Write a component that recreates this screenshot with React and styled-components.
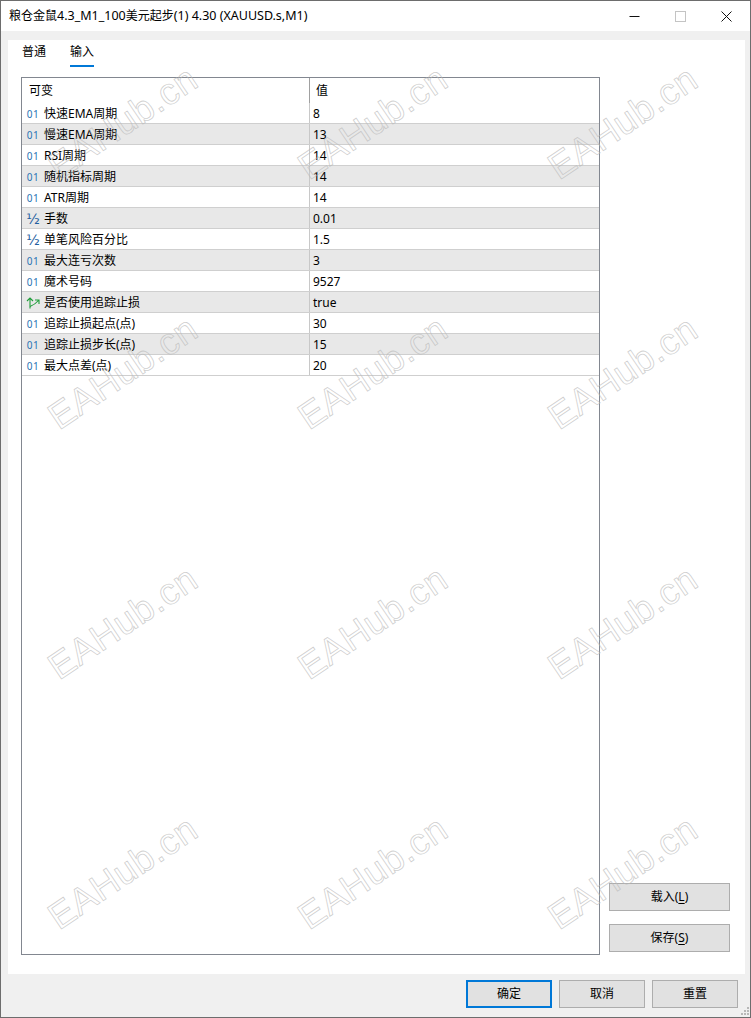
import React from 'react';
import styled, { createGlobalStyle } from 'styled-components';

const Global = createGlobalStyle`
  html, body { margin: 0; padding: 0; background: #f0f0f0; }
  * { box-sizing: border-box; }
  #root { width: 751px; height: 1018px; }
`;
const FONT = `"Noto Sans", "Noto Sans CJK SC", sans-serif`;

const Window = styled.div`
  position: relative; width: 751px; height: 1018px; overflow: hidden;
  display: flex; flex-direction: column;
  background: #f0f0f0; color: #000;
  border: 1px solid #6d6d6d;
  font: 12px/16px ${FONT};
`;
const TitleBar = styled.header`
  height: 30px; flex: none; background: #fff; display: flex; align-items: center; padding: 0 1px 0 8px;
`;
const Title = styled.div` flex: 1; font-size: 12.5px; color: #000; white-space: nowrap; `;
const TitleCjk = styled.span` font-size: 12px; `;
const WinButton = styled.div`
  width: 46px; height: 30px; display: flex; align-items: center; justify-content: center;
`;
const Body = styled.main`
  flex: 1; display: flex; flex-direction: column; padding: 9px 5px 0 7px; min-height: 0;
`;
const Panel = styled.section`
  flex: 1; background: #fff; display: flex; flex-direction: column; padding: 0 0 19px 13px; min-height: 0;
`;
const Tabs = styled.nav` display: flex; gap: 24px; height: 37px; padding: 3px 0 0 1px; `;
const Tab = styled.div`
  width: 24px; height: 24px; font-size: 12px; line-height: 18px; white-space: nowrap; color: #000;
  border-bottom: 2px solid ${p => (p.$active ? '#0078d7' : 'transparent')};
`;
const Content = styled.div` flex: 1; display: flex; min-height: 0; `;
const Table = styled.div`
  width: 579px; border: 1px solid #828790; display: flex; flex-direction: column; background: transparent;
`;
const Header = styled.div`
  display: grid; grid-template-columns: 287px 1fr; height: 25px; align-items: center;
`;
const HeadCell = styled.div`
  height: 25px; line-height: 25px; padding-left: 7px; font-size: 12px; color: #000;
  & + & { border-left: 1px solid #a0a0a0; padding-left: 6px; }
`;
const Row = styled.div`
  display: grid; grid-template-columns: 287px 1fr; height: 21px; align-items: center;
  background: ${p => (p.$alt ? '#e8e8e8' : 'transparent')};
  border-bottom: 1px solid #cfcfcf;
`;
const NameCell = styled.div`
  display: flex; align-items: center; height: 20px; padding-top: 2px; white-space: nowrap; font-size: 12px; color: #000;
`;
const IconBox = styled.span`
  width: 22px; flex: none; display: flex; justify-content: center;
`;
const IntMark = styled.span`
  font: 10px/12px "Noto Sans", sans-serif; color: #2873b4; letter-spacing: 0.6px;
`;
const FracMark = styled.span`
  font: 14px/16px "DejaVu Sans", sans-serif; color: #1f5f9f;
`;
const ValueCell = styled.div`
  height: 20px; line-height: 22px; padding-left: 3px; border-left: 1px solid #c8c8c8; font-size: 12px; color: #000;
`;
const Side = styled.aside`
  flex: 1; display: flex; flex-direction: column; justify-content: flex-end; align-items: flex-start;
  gap: 13px; padding: 0 0 3px 9px;
`;
const Button = styled.button`
  width: ${p => p.$w || 86}px; height: 28px; padding: 0; margin: 0; cursor: default;
  background: #e1e1e1; color: #000; font: 12px/16px ${FONT};
  border: ${p => (p.$primary ? '2px solid #0078d7' : '1px solid #adadad')};
  u { text-underline-offset: 2px; }
`;
const Footer = styled.footer`
  height: 43px; flex: none; display: flex; justify-content: flex-end; gap: 7px; padding: 6px 7px 0 0;
`;
const Grip = styled.svg` position: absolute; right: 0; bottom: 0; `;
const Watermarks = styled.div`
  position: absolute; top: -3px; left: -3px; right: 0; bottom: 0; pointer-events: none; overflow: hidden;
  display: grid; grid-template-columns: repeat(3, 250px); grid-auto-rows: 250px;
`;
const Mark = styled.div`
  display: flex; align-items: center; justify-content: center;
  font: 37px/44px "Liberation Sans", sans-serif; letter-spacing: 0.5px;
  color: transparent; -webkit-text-stroke: 0.8px rgba(185,185,185,0.7);
  transform: rotate(-34deg);
`;

const rows = [
  ['i', '快速EMA周期', '8'], ['i', '慢速EMA周期', '13'], ['i', 'RSI周期', '14'],
  ['i', '随机指标周期', '14'], ['i', 'ATR周期', '14'], ['f', '手数', '0.01'],
  ['f', '单笔风险百分比', '1.5'], ['i', '最大连亏次数', '3'], ['i', '魔术号码', '9527'],
  ['b', '是否使用追踪止损', 'true'], ['i', '追踪止损起点(点)', '30'],
  ['i', '追踪止损步长(点)', '15'], ['i', '最大点差(点)', '20'],
];

const BoolIcon = () => (
  <svg width="14" height="12" viewBox="0 0 14 12" fill="none" stroke="#1f9d3a" strokeWidth="1.1">
    <path d="M4 11.5 V1 M1 4 L4 1 L7 4" />
    <path d="M4 9.5 C6.5 8.5 9 7.5 12.5 3.5 M9 3 H13 V7" />
  </svg>
);
const TypeIcon = ({ t }) => (
  <IconBox>
    {t === 'i' && <IntMark>01</IntMark>}
    {t === 'f' && <FracMark>½</FracMark>}
    {t === 'b' && <BoolIcon />}
  </IconBox>
);

export default function App() {
  return (
    <>
      <Global />
      <Window>
        <TitleBar>
          <Title>
            <TitleCjk>粮仓金鼠</TitleCjk>4.3_M1_100<TitleCjk>美元起步</TitleCjk>(1) 4.30 (XAUUSD.s,M1)
          </Title>
          <WinButton>
            <svg width="11" height="11" viewBox="0 0 11 11"><path d="M0.5 5.5H10.5" stroke="#111" /></svg>
          </WinButton>
          <WinButton>
            <svg width="11" height="11" viewBox="0 0 11 11"><rect x="0.5" y="0.5" width="10" height="10" fill="none" stroke="#c4c4c4" /></svg>
          </WinButton>
          <WinButton>
            <svg width="11" height="11" viewBox="0 0 11 11"><path d="M0.5 0.5L10.5 10.5M10.5 0.5L0.5 10.5" stroke="#111" /></svg>
          </WinButton>
        </TitleBar>
        <Body>
          <Panel>
            <Tabs>
              <Tab>普通</Tab>
              <Tab $active>输入</Tab>
            </Tabs>
            <Content>
              <Table>
                <Header>
                  <HeadCell>可变</HeadCell>
                  <HeadCell>值</HeadCell>
                </Header>
                {rows.map(([t, n, v], i) => (
                  <Row key={n} $alt={i % 2 === 1}>
                    <NameCell><TypeIcon t={t} />{n}</NameCell>
                    <ValueCell>{v}</ValueCell>
                  </Row>
                ))}
              </Table>
              <Side>
                <Button $w={121}>载入(<u>L</u>)</Button>
                <Button $w={121}>保存(<u>S</u>)</Button>
              </Side>
            </Content>
          </Panel>
          <Footer>
            <Button $primary>确定</Button>
            <Button>取消</Button>
            <Button>重置</Button>
          </Footer>
        </Body>
        <Watermarks>
          {Array.from({ length: 12 }, (_, i) => <Mark key={i}>EAHub.cn</Mark>)}
        </Watermarks>
        <Grip width="12" height="12" viewBox="0 0 12 12" fill="#b8b8b8">
          <rect x="9" y="2" width="2" height="2" />
          <rect x="6" y="5" width="2" height="2" /><rect x="9" y="5" width="2" height="2" />
          <rect x="3" y="8" width="2" height="2" /><rect x="6" y="8" width="2" height="2" /><rect x="9" y="8" width="2" height="2" />
        </Grip>
      </Window>
    </>
  );
}
